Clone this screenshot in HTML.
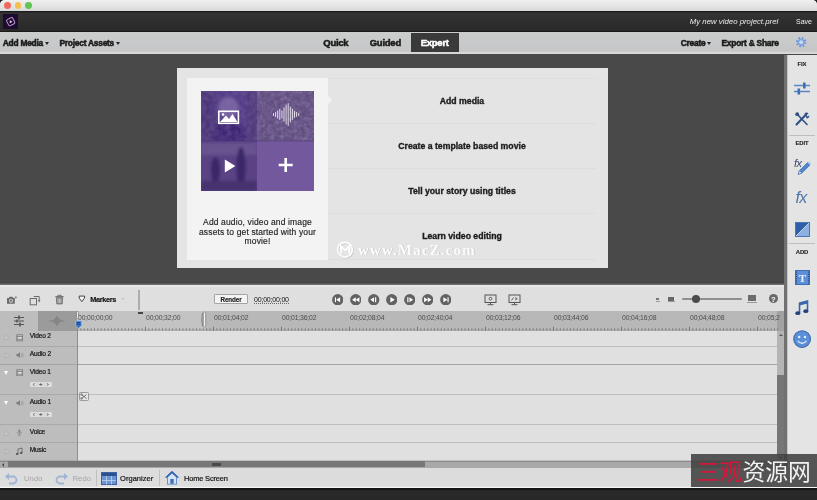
<!DOCTYPE html>
<html lang="en">
<head>
<meta charset="utf-8">
<title>My new video project.prel</title>
<style>
*{box-sizing:border-box;margin:0;padding:0}
html,body{width:817px;height:500px;overflow:hidden;background:#494949}
body{position:relative;font-family:"Liberation Sans","DejaVu Sans",sans-serif;color:#1a1a1a;font-size:8px}
.abs,.abs *{position:absolute}
#app{position:absolute;left:0;top:0;width:817px;height:500px;overflow:hidden;will-change:transform}
#app div,#app span,#app svg{position:absolute}
.t{white-space:nowrap;line-height:1}
.b{font-weight:bold;-webkit-text-stroke:.5px currentColor}
.sb{font-weight:bold;-webkit-text-stroke:.15px currentColor}
/* window chrome */
#titlebar{left:0;top:0;width:817px;height:11.300px;background:linear-gradient(#f0f0f0,#d9d9d9)}
.tl{width:6.800px;height:6.800px;border-radius:50%;top:2.200px}
#hdr{left:0;top:11.300px;width:817px;height:20.300px;background:linear-gradient(#181818 0,#1c1c1c 4%,#343434 9%,#2e2e2e 50%,#2a2a2a 93%,#1a1a1a 97%,#1a1a1a 100%)}
#menubar{left:0;top:31.600px;width:817px;height:22.700px;background:linear-gradient(#cbcccc 0,#c6c7c8 80%,#c4c5c5 87%,#d4d4d4 91%,#d9d9d9 100%)}
#work{left:0;top:54.300px;width:784px;height:229px;background:#494949}
#rpanel{left:787px;top:54px;width:30px;height:414px;background:#e4e4e4;box-shadow:inset 1px 0 0 #c4c4c4}
#rtop{left:784px;top:54.300px;width:33px;height:.9px;background:#4a4a4a}
/* dialog */
#dlg{left:177px;top:68px;width:431px;height:200px;background:#e5e4e5}
#card{left:187px;top:78px;width:141px;height:182px;background:#f3f3f3}
.row{left:328px;width:268px;height:45px;border-bottom:1px solid #dddcde}
.rowt{left:0;width:268px;text-align:center;font-weight:bold;font-size:8.700px;letter-spacing:0;color:#1c1c1c;top:18.200px;-webkit-text-stroke:.35px #1c1c1c}
/* timeline */
#tlpanel{left:0;top:282px;width:784px;height:186px;background:#dfdfdf}
#sep{left:784px;top:54px;width:3px;height:414px;background:#707070}
#tltop{left:0;top:0;width:784px;height:3px;background:linear-gradient(#3a3a3a,#777)}
#ruler{left:0;top:29px;width:784px;height:20px;background:#bdbdbd}
.th{left:0;width:77px;background:#bdbdbd;border-bottom:1px solid #a9a9a9}
.tr{left:77px;width:700px;border-bottom:1px solid #bfbfbf}
.tn{left:29.800px;font-size:6.600px;color:#0c0c0c;letter-spacing:-.18px;-webkit-text-stroke:.2px #222}
#bottombar{left:0;top:467.600px;width:817px;height:20.400px;background:linear-gradient(#dcdcdc 0,#dddddd 92%,#f6f6f6 95%,#f6f6f6 100%)}
#foot{left:0;top:488px;width:817px;height:12px;background:linear-gradient(#121212 0,#161616 12%,#292929 22%,#282828 100%)}
</style>
</head>
<body>
<div id="app">
  <div id="titlebar">
    <div style="left:0;top:0;width:4px;height:4px;background:radial-gradient(circle at 100% 100%,rgba(0,0,0,0) 3.500px,#222 4.200px)"></div><div style="left:813px;top:0;width:4px;height:4px;background:radial-gradient(circle at 0 100%,rgba(0,0,0,0) 3.500px,#222 4.200px)"></div>
    <div class="tl" style="left:4.200px;background:#ee6a5f"></div>
    <div class="tl" style="left:14.700px;background:#f5bf4f"></div>
    <div class="tl" style="left:25.400px;background:#62c554"></div>
  </div>
  <div id="hdr">
    <svg style="left:2.800px;top:2.800px" width="15.400" height="15.400" viewBox="0 0 15 15"><rect width="15" height="15" fill="#1d0d2c"/><rect x="4.200" y="4.200" width="6.600" height="6.600" rx="1.200" fill="none" stroke="#c997e0" stroke-width=".9" transform="rotate(-27 7.500 7.500)"/><path d="M6.600 6.100 L9.300 7.600 L6.600 9.100Z" fill="#ecd3f7"/></svg>
    <span class="t" style="left:689.800px;top:7px;font-size:7.800px;font-style:italic;color:#ececec">My new video project.prel</span>
    <span class="t" style="left:796px;top:7px;font-size:7px;color:#f0f0f0">Save</span>
  </div>
  <div id="menubar">
    <span class="t b" style="left:2.800px;top:7.900px;font-size:8.400px;letter-spacing:-.24px">Add Media</span>
    <span class="t" style="left:45.300px;top:10.900px;width:0;height:0;border-left:2.5px solid transparent;border-right:2.5px solid transparent;border-top:3px solid #222"></span>
    <span class="t b" style="left:59.500px;top:7.900px;font-size:8.400px;letter-spacing:-.24px">Project Assets</span>
    <span class="t" style="left:116px;top:10.900px;width:0;height:0;border-left:2.5px solid transparent;border-right:2.5px solid transparent;border-top:3px solid #222"></span>
    <span class="t b" style="left:323.300px;top:6.800px;font-size:9.500px;letter-spacing:-.26px">Quick</span>
    <span class="t b" style="left:369.700px;top:6.800px;font-size:9.500px;letter-spacing:-.24px">Guided</span>
    <div style="left:411px;top:1.700px;width:47.500px;height:18.600px;background:#3a3a3a"></div>
    <span class="t b" style="left:420.700px;top:6.800px;font-size:9.500px;letter-spacing:-.25px;color:#fff">Expert</span>
    <span class="t b" style="left:680.800px;top:7.900px;font-size:8.400px;letter-spacing:-.24px">Create</span>
    <span class="t" style="left:707.200px;top:10.900px;width:0;height:0;border-left:2.5px solid transparent;border-right:2.5px solid transparent;border-top:3px solid #222"></span>
    <span class="t b" style="left:721.500px;top:7.900px;font-size:8.400px;letter-spacing:-.24px">Export &amp; Share</span>
    <svg style="left:795.300px;top:4.700px" width="12.300" height="12.300" viewBox="0 0 13 13"><circle cx="6.500" cy="6.500" r="4.400" fill="none" stroke="#6d95d4" stroke-width="2.200" stroke-dasharray="1.730 1.730"/><circle cx="6.500" cy="6.500" r="3.700" fill="#7ea3dc"/><circle cx="6.500" cy="6.500" r="2" fill="#c9daf3"/></svg>
  </div>
  <div id="work"></div>

  <div id="dlg"></div>
  <div class="row" style="top:78px;height:46px;border-top:1px solid #e0dfe0"><span class="t rowt">Add media</span></div>
  <div class="row" style="top:124px"><span class="t rowt" style="top:18.300px">Create a template based movie</span></div>
  <div class="row" style="top:169px"><span class="t rowt" style="top:18.300px">Tell your story using titles</span></div>
  <div class="row" style="top:214px;height:46px"><span class="t rowt" style="top:18.300px">Learn video editing</span></div>
  <div id="card"></div>
  <div style="left:328px;top:96px;width:0;height:0;border-top:4px solid transparent;border-bottom:4px solid transparent;border-left:4px solid #f3f3f3"></div>
  <svg id="pic" style="left:201px;top:91px" width="113" height="100" viewBox="0 0 113 100">
    <defs>
      <filter id="nz" x="0" y="0" width="100%" height="100%"><feTurbulence type="fractalNoise" baseFrequency="0.2" numOctaves="3" seed="7"/><feColorMatrix type="matrix" values="0 0 0 0 0.17  0 0 0 0 0.11  0 0 0 0 0.30  1.6 1.6 0 0 -1.15"/></filter><filter id="nz2" x="0" y="0" width="100%" height="100%"><feTurbulence type="fractalNoise" baseFrequency="0.3" numOctaves="2" seed="11"/><feColorMatrix type="matrix" values="0 0 0 0 0.50  0 0 0 0 0.44  0 0 0 0 0.62  1.1 1.1 0 0 -1.05"/></filter>
      <filter id="bl"><feGaussianBlur stdDeviation="1.6"/></filter>
    </defs>
    <rect x="0" y="0" width="56" height="50" fill="#543c88"/>
    <g filter="url(#bl)">
      <ellipse cx="27.500" cy="17" rx="10" ry="11" fill="#7a66a6"/>
      <ellipse cx="27" cy="43" rx="19" ry="13" fill="#3d2874"/>
      <rect x="0" y="0" width="14" height="50" fill="#4c367a"/>
      <rect x="46" y="0" width="10" height="50" fill="#4f3a7c"/>
    </g>
    <rect x="56" y="0" width="57" height="50" fill="#5e4e7b"/>
    <rect x="56" y="0" width="57" height="50" filter="url(#nz)"/><rect x="56" y="0" width="57" height="50" filter="url(#nz2)" opacity=".4"/><rect x="0" y="0" width="56" height="100" filter="url(#nz)" opacity=".45"/>
    <rect x="0" y="50" width="56" height="50" fill="#5a4284"/>
    <g filter="url(#bl)">
      <rect x="0" y="52" width="56" height="12" fill="#67528f"/>
      <ellipse cx="14.500" cy="79" rx="4.500" ry="13" fill="#3a2768"/>
      <ellipse cx="40" cy="76" rx="4.500" ry="20" fill="#3a2768"/>
      <rect x="0" y="90" width="56" height="10" fill="#46316f"/>
    </g>
    <rect x="56" y="50" width="57" height="50" fill="#74589d"/>
    <rect x="0" y="49.5" width="113" height="1" fill="#4a3570" opacity=".5"/>
    <!-- image icon -->
    <rect x="17.8" y="20.3" width="19.6" height="12" fill="none" stroke="#fff" stroke-width="1.6"/>
    <path d="M19 31 L25 24.5 L28 28 L31.5 23 L36.5 31Z" fill="#fff"/><circle cx="22" cy="23.5" r="1.3" fill="#fff"/>
    <!-- waveform -->
    <g stroke="#f1eef6" stroke-width=".9" stroke-linecap="round">
      <path d="M72.5 22.5v2M74.6 21.5v4M76.7 20v7M78.8 18.5v10M80.9 20v7M83 17v13M85.1 14v19M87.2 12.5v22M89.3 16v15M91.4 18.5v10M93.5 20.5v6M95.6 21.5v4M97.7 22.5v2"/>
    </g>
    <!-- play -->
    <path d="M23.8 68.6 L34.4 75 L23.8 81.4Z" fill="#fff"/>
    <!-- plus -->
    <path d="M84.7 67v14M77.7 74h14" stroke="#fff" stroke-width="2.6"/>
  </svg>
  <div class="t" style="left:187px;top:218px;width:141px;text-align:center;font-size:8.5px;line-height:9.6px;letter-spacing:.13px;color:#1e1e1e;white-space:normal;-webkit-text-stroke:.15px #1e1e1e">Add audio, video and image<br>assets to get started with your<br>movie!</div>
  <svg style="left:334px;top:239px" width="156" height="22" viewBox="0 0 156 22">
    <g transform="translate(.7 .7)" opacity=".55"><circle cx="11" cy="10.7" r="7.4" fill="none" stroke="#a9a9b6" stroke-width="1.5"/><text x="24" y="15.5" font-family="'Liberation Serif',serif" font-weight="bold" font-size="15" letter-spacing="1.15" fill="#a9a9b6">www.MacZ.com</text></g>
    <circle cx="11" cy="10.7" r="7.4" fill="none" stroke="#fff" stroke-opacity=".95" stroke-width="1.7"/>
    <path d="M6.8 14.5 V7.3 L11 11.4 L15.2 7.3 V14.5" fill="none" stroke="#fff" stroke-opacity=".95" stroke-width="1.7"/>
    <text x="24" y="15.5" font-family="'Liberation Serif',serif" font-weight="bold" font-size="15" letter-spacing="1.15" fill="#fff" fill-opacity=".93">www.MacZ.com</text>
  </svg>
  <div id="rpanel">
    <span class="t sb" style="left:0;width:30px;text-align:center;top:8.0px;font-size:5.900px;color:#1c1c1c;letter-spacing:-.05px;-webkit-text-stroke:.1px #1c1c1c">FIX</span>
    <svg style="left:6px;top:27px" width="18" height="15" viewBox="0 0 18 15"><path d="M1 4.500h16M1 10.500h16" stroke="#5b86c4" stroke-width="1.500"/><rect x="10" y="1.500" width="2.600" height="6" fill="#3f6fb5"/><rect x="4.500" y="7.500" width="2.600" height="6" fill="#3f6fb5"/></svg>
    <svg style="left:7px;top:57px" width="16" height="16" viewBox="0 0 16 16"><path d="M2.500 13.500L12 3.500" stroke="#2f4f86" stroke-width="2" stroke-linecap="round"/><path d="M3 3l10 10.500" stroke="#2f4f86" stroke-width="1.600" stroke-linecap="round"/><path d="M10.500 2.200c1.500-1 3.300-.6 4 .300l-2 1.800.8 1.300 2-1.200c.2 1.500-.8 2.800-2.600 3z" fill="#2f4f86"/><circle cx="3.200" cy="3.200" r="1.900" fill="#2f4f86"/></svg>
    <div style="left:2px;top:80.5px;width:26px;height:1px;background:#bdbdbd"></div>
    <span class="t sb" style="left:0;width:30px;text-align:center;top:87.0px;font-size:5.900px;color:#1c1c1c;letter-spacing:-.05px;-webkit-text-stroke:.1px #1c1c1c">EDIT</span>
    <svg style="left:5px;top:102px" width="24" height="21" viewBox="0 0 24 21"><text x="2" y="10.500" font-family="'Liberation Sans',sans-serif" font-style="italic" font-size="11" letter-spacing="-.5" fill="#3a4c6e">fx</text><path d="M6.200 18.300l1.200-3.600 8.200-8.200 2.400 2.400-8.200 8.200z" fill="#4f86d0" stroke="#2f5fa8" stroke-width=".6"/><path d="M6.200 18.300l1.200-3.600 2.400 2.400z" fill="#e4e9f2" stroke="#2f4f86" stroke-width=".4"/><path d="M15.600 6.500l1.300-1.300 2.400 2.400-1.300 1.300z" fill="#b8cdee"/></svg>
    <svg style="left:6px;top:134px" width="20" height="20" viewBox="0 0 20 20"><text x="2.500" y="14.500" font-family="'Liberation Sans',sans-serif" font-style="italic" font-size="16" letter-spacing="-.8" fill="#4f72a8">fx</text></svg>
    <svg style="left:7.500px;top:167.5px" width="15" height="15" viewBox="0 0 15 15"><rect x=".500" y=".500" width="14" height="14" fill="#2f5fa8" stroke="#4a76b8" stroke-width="1"/><path d="M1 14L14 1v13z" fill="#8db0e2"/><path d="M1 14L14 1" stroke="#dfe9f7" stroke-width=".8"/></svg>
    <div style="left:2px;top:189px;width:26px;height:1px;background:#bdbdbd"></div>
    <span class="t sb" style="left:0;width:30px;text-align:center;top:195.5px;font-size:5.900px;color:#1c1c1c;letter-spacing:-.05px;-webkit-text-stroke:.1px #1c1c1c">ADD</span>
    <svg style="left:7.500px;top:215.5px" width="15" height="15" viewBox="0 0 15 15"><rect x=".500" y=".500" width="14" height="14" fill="#5e90d8" stroke="#3f6fb8" stroke-width="1"/><path d="M1.500 1.500v12M13.500 1.500v12" stroke="#2a4f90" stroke-width="1.200" stroke-dasharray="1.200 1"/><text x="7.500" y="11.500" text-anchor="middle" font-family="'Liberation Serif',serif" font-weight="bold" font-size="11" fill="#eaf1fb">T</text></svg>
    <svg style="left:7px;top:245px" width="16" height="18" viewBox="0 0 16 18"><path d="M5.500 14v-10l8-2v10" fill="none" stroke="#3a66ad" stroke-width="1.600"/><path d="M5.500 4l8-2v2.500l-8 2z" fill="#3a66ad"/><ellipse cx="3.800" cy="14.200" rx="2.500" ry="1.900" fill="#24427c"/><ellipse cx="11.800" cy="12.200" rx="2.500" ry="1.900" fill="#24427c"/></svg>
    <svg style="left:6.400px;top:275.900px" width="18.200" height="18.200" viewBox="0 0 17 17"><circle cx="8.500" cy="8.500" r="7.800" fill="#5b8fd8" stroke="#3a66ad" stroke-width="1"/><circle cx="5.800" cy="6.500" r="1.100" fill="#e8f0fb"/><circle cx="11.200" cy="6.500" r="1.100" fill="#e8f0fb"/><path d="M4.500 10c1.800 3.200 6.200 3.200 8 0" fill="none" stroke="#e8f0fb" stroke-width="1.200"/></svg>
  </div>
  <div id="tlpanel">
    <div id="tltop"></div><div style="left:0;top:3px;width:784px;height:1.600px;background:#e8e8e8"></div>
    <svg style="left:5.500px;top:12.500px" width="12" height="10" viewBox="0 0 12 10"><path d="M1 3h1.800l.8-1.200h2.800l.8 1.200h1.600v5.800H1z" fill="#6c6c6c"/><circle cx="5" cy="5.700" r="2" fill="#d6d6d6"/><circle cx="5" cy="5.700" r="1.100" fill="#6c6c6c"/><path d="M9.800 1.200v2.400M8.600 2.400h2.400" stroke="#7a7a7a" stroke-width=".7"/></svg>
    <svg style="left:29px;top:12.500px" width="13" height="11" viewBox="0 0 13 11"><rect x="1.200" y="3.500" width="6.300" height="6.300" fill="none" stroke="#6a6a6a" stroke-width="1"/><path d="M4.800 1.500h5.400v4.800" fill="none" stroke="#6a6a6a" stroke-width="1"/><path d="M8.800 5.300l1.400 1.900 1.400-1.900z" fill="#6a6a6a"/></svg>
    <svg style="left:53.500px;top:12.300px" width="11" height="11" viewBox="0 0 11 11"><path d="M1.300 2.600h8.400M3.800 2.600v-1.300h3.400v1.300" fill="none" stroke="#666" stroke-width=".9"/><path d="M2.300 3.600h6.400l-.5 6.400h-5.400z" fill="#8a8a8a" stroke="#666" stroke-width=".7"/><path d="M4.200 4.500v4.600M5.500 4.500v4.600M6.800 4.500v4.600" stroke="#dcdcdc" stroke-width=".6"/></svg>
    <svg style="left:78.200px;top:12.600px" width="8.200" height="8.200" viewBox="0 0 9 9"><path d="M1.200 1.200h6.100l-.2 2.300-2.850 3.800-2.850-3.800z" fill="#f4f4f4" stroke="#222" stroke-width=".9" stroke-linejoin="round"/></svg>
    <span class="t sb" style="left:90.300px;top:13.600px;font-size:7.300px;letter-spacing:-.34px;color:#111">Markers</span>
    <span style="left:121px;top:16px;width:0;height:0;border-left:2px solid transparent;border-right:2px solid transparent;border-top:2.500px solid #c6c6c6"></span>
    <div style="left:138.200px;top:8px;width:1.400px;height:20px;background:#adadad"></div>
    <div style="left:214.300px;top:12.300px;width:33.400px;height:10px;background:#f4f4f4;border:1px solid #a4a4a4;border-radius:1px"></div>
    <span class="t sb" style="left:214.300px;width:33.400px;text-align:center;top:14.500px;font-size:6.300px;letter-spacing:-.1px;color:#222">Render</span>
    <span class="t" style="left:254px;top:13.600px;font-size:7px;letter-spacing:-.2px;color:#111;border-bottom:1px dotted #666;padding-bottom:0">00;00;00;00</span>
    <svg style="left:331.75px;top:11.700px" width="11.500" height="11.500" viewBox="0 0 11 11"><circle cx="5.500" cy="5.500" r="5.400" fill="#626262"/><path d="M3.300 3.200v4.600" stroke="#fff" stroke-width="1.100"/><path d="M7.800 3v5L4 5.500z" fill="#fff"/></svg>
    <svg style="left:349.85px;top:11.700px" width="11.500" height="11.500" viewBox="0 0 11 11"><circle cx="5.500" cy="5.500" r="5.400" fill="#626262"/><path d="M5.500 3v5L2 5.500zM9 3v5L5.500 5.500z" fill="#fff"/></svg>
    <svg style="left:368.05px;top:11.700px" width="11.500" height="11.500" viewBox="0 0 11 11"><circle cx="5.500" cy="5.500" r="5.400" fill="#626262"/><path d="M5.800 3v5L2.300 5.500z" fill="#fff"/><path d="M7.300 3.200v4.600" stroke="#fff" stroke-width="1.100"/></svg>
    <svg style="left:385.85px;top:11.700px" width="11.500" height="11.500" viewBox="0 0 11 11"><circle cx="5.500" cy="5.500" r="5.400" fill="#626262"/><path d="M4.200 2.800v5.400L8.400 5.500z" fill="#fff"/></svg>
    <svg style="left:403.95px;top:11.700px" width="11.500" height="11.500" viewBox="0 0 11 11"><circle cx="5.500" cy="5.500" r="5.400" fill="#626262"/><path d="M5.200 3v5L8.700 5.500z" fill="#fff"/><path d="M3.700 3.200v4.600" stroke="#fff" stroke-width="1.100"/></svg>
    <svg style="left:421.85px;top:11.700px" width="11.500" height="11.500" viewBox="0 0 11 11"><circle cx="5.500" cy="5.500" r="5.400" fill="#626262"/><path d="M2 3v5L5.500 5.500zM5.500 3v5L9 5.500z" fill="#fff"/></svg>
    <svg style="left:439.95px;top:11.700px" width="11.500" height="11.500" viewBox="0 0 11 11"><circle cx="5.500" cy="5.500" r="5.400" fill="#626262"/><path d="M3.200 3v5L7 5.500z" fill="#fff"/><path d="M7.700 3.200v4.600" stroke="#fff" stroke-width="1.100"/></svg>
    <svg style="left:484px;top:11.600px" width="13" height="12" viewBox="0 0 13 12"><rect x="1" y="1" width="11" height="7.500" fill="none" stroke="#555" stroke-width="1"/><circle cx="6.500" cy="4.700" r="1.400" fill="none" stroke="#555" stroke-width=".9"/><path d="M6.500 8.500v2M3.500 10.700h6" stroke="#555" stroke-width="1"/></svg>
    <svg style="left:507.500px;top:11.600px" width="13" height="12" viewBox="0 0 13 12"><rect x="1" y="1" width="11" height="7.500" fill="none" stroke="#555" stroke-width="1"/><path d="M3.500 6.500l2-3M7 3.500l2.200 1.300-2.200 1.300" fill="none" stroke="#555" stroke-width=".9"/><path d="M6.500 8.500v2M3.500 10.700h6" stroke="#555" stroke-width="1"/></svg>
    <div style="left:656px;top:16px;width:3px;height:2px;background:#777"></div><div style="left:655.500px;top:18.5px;width:4px;height:1px;background:#999"></div>
    <div style="left:668px;top:14.5px;width:6px;height:4px;background:#666"></div><div style="left:667.500px;top:19px;width:7px;height:1px;background:#999"></div>
    <div style="left:682px;top:16px;width:60px;height:2px;background:#8e8e8e;border-radius:1px"></div>
    <div style="left:691.500px;top:13px;width:8px;height:8px;border-radius:50%;background:#4a4a4a"></div>
    <div style="left:748px;top:13px;width:8px;height:6px;background:#6c6c6c"></div><div style="left:747px;top:19.5px;width:10px;height:1px;background:#999"></div>
    <div style="left:769px;top:12px;width:9px;height:9px;border-radius:50%;background:#6a6a6a"></div><span class="t sb" style="left:769px;width:9px;text-align:center;top:13.5px;font-size:7px;color:#f2f2f2">?</span>
    <div id="ruler"></div><div style="left:206px;top:29px;width:572px;height:20px;background:#b8b8b8"></div><div style="left:77px;top:29px;width:128px;height:20px;background:#c3c3c3"></div>
    <div style="left:38px;top:29px;width:39px;height:20px;background:#9b9b9b"></div>
    <div style="left:777px;top:29px;width:7px;height:20px;background:#a2a2a2"></div>
    <svg style="left:12px;top:32px" width="14" height="14" viewBox="0 0 14 14"><path d="M2 3.500h10M2 7h10M2 10.500h10" stroke="#555" stroke-width="1"/><path d="M7 1.500v4M5 5.500v3M8 8.500v4" stroke="#555" stroke-width="1.600"/></svg>
    <svg style="left:48px;top:32px" width="18" height="14" viewBox="0 0 18 14"><path d="M1.500 7h15" stroke="#808080" stroke-width="1"/><path d="M9 1.500c-1.200 2.500-3 4.500-5 5.500 2 1 3.800 3 5 5.500 1.200-2.500 3-4.500 5-5.500-2-1-3.800-3-5-5.500z" fill="#858585"/></svg>
    <span class="t" style="left:78px;top:33.300px;font-size:6.800px;color:#4c4c4c;letter-spacing:-.15px">00;00;00;00</span>
    <span class="t" style="left:146px;top:33.300px;font-size:6.800px;color:#4c4c4c;letter-spacing:-.15px">00;00;32;00</span>
    <span class="t" style="left:214px;top:33.300px;font-size:6.800px;color:#4c4c4c;letter-spacing:-.15px">00;01;04;02</span>
    <span class="t" style="left:282px;top:33.300px;font-size:6.800px;color:#4c4c4c;letter-spacing:-.15px">00;01;36;02</span>
    <span class="t" style="left:350px;top:33.300px;font-size:6.800px;color:#4c4c4c;letter-spacing:-.15px">00;02;08;04</span>
    <span class="t" style="left:418px;top:33.300px;font-size:6.800px;color:#4c4c4c;letter-spacing:-.15px">00;02;40;04</span>
    <span class="t" style="left:486px;top:33.300px;font-size:6.800px;color:#4c4c4c;letter-spacing:-.15px">00;03;12;06</span>
    <span class="t" style="left:554px;top:33.300px;font-size:6.800px;color:#4c4c4c;letter-spacing:-.15px">00;03;44;06</span>
    <span class="t" style="left:622px;top:33.300px;font-size:6.800px;color:#4c4c4c;letter-spacing:-.15px">00;04;16;08</span>
    <span class="t" style="left:690px;top:33.300px;font-size:6.800px;color:#4c4c4c;letter-spacing:-.15px">00;04;48;08</span>
    <span class="t" style="left:758px;top:33.300px;font-size:6.800px;color:#4c4c4c;letter-spacing:-.15px">00;05;2</span>
    <svg style="left:0;top:29px" width="778" height="20" viewBox="0 0 778 20"><path d="M77 19.100h701" stroke="#a6a6a6" stroke-width=".8"/><path d="M77.5 15.8v4.2M80.9 17.4v2M84.3 17.4v2M87.7 17.4v2M91.1 17.4v2M94.5 17.4v2M97.9 17.4v2M101.3 17.4v2M104.7 17.4v2M108.1 17.4v2M111.5 17.4v2M114.9 17.4v2M118.3 17.4v2M121.7 17.4v2M125.1 17.4v2M128.5 17.4v2M131.9 17.4v2M135.3 17.4v2M138.7 17.4v2M142.1 17.4v2M145.5 15.8v4.2M148.9 17.4v2M152.3 17.4v2M155.7 17.4v2M159.1 17.4v2M162.5 17.4v2M165.9 17.4v2M169.3 17.4v2M172.7 17.4v2M176.1 17.4v2M179.5 17.4v2M182.9 17.4v2M186.3 17.4v2M189.7 17.4v2M193.1 17.4v2M196.5 17.4v2M199.9 17.4v2M203.3 17.4v2M206.7 17.4v2M210.1 17.4v2M213.5 15.8v4.2M216.9 17.4v2M220.3 17.4v2M223.7 17.4v2M227.1 17.4v2M230.5 17.4v2M233.9 17.4v2M237.3 17.4v2M240.7 17.4v2M244.1 17.4v2M247.5 17.4v2M250.9 17.4v2M254.3 17.4v2M257.7 17.4v2M261.1 17.4v2M264.5 17.4v2M267.9 17.4v2M271.3 17.4v2M274.7 17.4v2M278.1 17.4v2M281.5 15.8v4.2M284.9 17.4v2M288.3 17.4v2M291.7 17.4v2M295.1 17.4v2M298.5 17.4v2M301.9 17.4v2M305.3 17.4v2M308.7 17.4v2M312.1 17.4v2M315.5 17.4v2M318.9 17.4v2M322.3 17.4v2M325.7 17.4v2M329.1 17.4v2M332.5 17.4v2M335.9 17.4v2M339.3 17.4v2M342.7 17.4v2M346.1 17.4v2M349.5 15.8v4.2M352.9 17.4v2M356.3 17.4v2M359.7 17.4v2M363.1 17.4v2M366.5 17.4v2M369.9 17.4v2M373.3 17.4v2M376.7 17.4v2M380.1 17.4v2M383.5 17.4v2M386.9 17.4v2M390.3 17.4v2M393.7 17.4v2M397.1 17.4v2M400.5 17.4v2M403.9 17.4v2M407.3 17.4v2M410.7 17.4v2M414.1 17.4v2M417.5 15.8v4.2M420.9 17.4v2M424.3 17.4v2M427.7 17.4v2M431.1 17.4v2M434.5 17.4v2M437.9 17.4v2M441.3 17.4v2M444.7 17.4v2M448.1 17.4v2M451.5 17.4v2M454.9 17.4v2M458.3 17.4v2M461.7 17.4v2M465.1 17.4v2M468.5 17.4v2M471.9 17.4v2M475.3 17.4v2M478.7 17.4v2M482.1 17.4v2M485.5 15.8v4.2M488.9 17.4v2M492.3 17.4v2M495.7 17.4v2M499.1 17.4v2M502.5 17.4v2M505.9 17.4v2M509.3 17.4v2M512.7 17.4v2M516.1 17.4v2M519.5 17.4v2M522.9 17.4v2M526.3 17.4v2M529.7 17.4v2M533.1 17.4v2M536.5 17.4v2M539.9 17.4v2M543.3 17.4v2M546.7 17.4v2M550.1 17.4v2M553.5 15.8v4.2M556.9 17.4v2M560.3 17.4v2M563.7 17.4v2M567.1 17.4v2M570.5 17.4v2M573.9 17.4v2M577.3 17.4v2M580.7 17.4v2M584.1 17.4v2M587.5 17.4v2M590.9 17.4v2M594.3 17.4v2M597.7 17.4v2M601.1 17.4v2M604.5 17.4v2M607.9 17.4v2M611.3 17.4v2M614.7 17.4v2M618.1 17.4v2M621.5 15.8v4.2M624.9 17.4v2M628.3 17.4v2M631.7 17.4v2M635.1 17.4v2M638.5 17.4v2M641.9 17.4v2M645.3 17.4v2M648.7 17.4v2M652.1 17.4v2M655.5 17.4v2M658.9 17.4v2M662.3 17.4v2M665.7 17.4v2M669.1 17.4v2M672.5 17.4v2M675.9 17.4v2M679.3 17.4v2M682.7 17.4v2M686.1 17.4v2M689.5 15.8v4.2M692.9 17.4v2M696.3 17.4v2M699.7 17.4v2M703.1 17.4v2M706.5 17.4v2M709.9 17.4v2M713.3 17.4v2M716.7 17.4v2M720.1 17.4v2M723.5 17.4v2M726.9 17.4v2M730.3 17.4v2M733.7 17.4v2M737.1 17.4v2M740.5 17.4v2M743.9 17.4v2M747.3 17.4v2M750.7 17.4v2M754.1 17.4v2M757.5 15.8v4.2M760.9 17.4v2M764.3 17.4v2M767.7 17.4v2M771.1 17.4v2M774.5 17.4v2M777.9 17.4v2" stroke="#555" stroke-width=".65"/></svg>
    <svg style="left:200.300px;top:29px" width="8" height="17" viewBox="0 0 8 17"><path d="M3 1.500c-1.500 3-1.500 11 0 14" fill="none" stroke="#777" stroke-width="1"/><rect x="3.300" y="1" width="2.400" height="15" rx="1.200" fill="#f0f0f0" stroke="#777" stroke-width=".7"/></svg>
    <div style="left:76.300px;top:29.400px;width:2.800px;height:8px;border-radius:1.400px;background:#f0f0f0;border:.6px solid #8a8a8a"></div><div style="left:138.200px;top:30.400px;width:4.400px;height:1.600px;background:#444"></div>
    <div id="tracks" style="left:0;top:49px;width:777px;height:130px;background:#e0e0e0"></div>
    <div class="th" style="top:49px;height:16px"></div>
    <div class="tr" style="top:49px;height:16px"></div>
    <span class="t tn" style="top:51px">Video 2</span>
    <svg style="left:15.500px;top:52.2px" width="7.600" height="7.600" viewBox="0 0 9 10" preserveAspectRatio="none"><rect x="1" y="1" width="7" height="8" fill="none" stroke="#777" stroke-width="1"/><path d="M1 3.300h7M1 6.700h7" stroke="#666" stroke-width=".8"/><rect x="2.800" y="3.800" width="3.400" height="2.400" fill="#ddd"/></svg>
    <svg style="left:3.500px;top:52px" width="6" height="7" viewBox="0 0 6 7"><path d="M.8.800L5 3.500.8 6.200z" fill="#c8c8c8" stroke="#aaaaaa" stroke-width=".6"/></svg>
    <div class="th" style="top:65px;height:18px"></div>
    <div class="tr" style="top:65px;height:18px"></div>
    <span class="t tn" style="top:69px">Audio 2</span>
    <svg style="left:14px;top:67.5px" width="8.500" height="8.500" viewBox="0 0 10 10" transform="translate(1.500 .8)"><path d="M1 3.700h1.800L5.300 1.500v7L2.800 6.300H1z" fill="#808080"/><path d="M6.500 3.300c.9.900.9 2.500 0 3.400M7.800 2.200c1.500 1.500 1.500 4.100 0 5.600" fill="none" stroke="#888" stroke-width=".7"/></svg>
    <svg style="left:3.500px;top:69.5px" width="6" height="7" viewBox="0 0 6 7"><path d="M.8.800L5 3.500.8 6.200z" fill="#c8c8c8" stroke="#aaaaaa" stroke-width=".6"/></svg>
    <div class="th" style="top:83px;height:30px"></div>
    <div class="tr" style="top:83px;height:30px"></div>
    <span class="t tn" style="top:87px">Video 1</span>
    <svg style="left:15.500px;top:86.7px" width="7.600" height="7.600" viewBox="0 0 9 10" preserveAspectRatio="none"><rect x="1" y="1" width="7" height="8" fill="none" stroke="#777" stroke-width="1"/><path d="M1 3.300h7M1 6.700h7" stroke="#666" stroke-width=".8"/><rect x="2.800" y="3.800" width="3.400" height="2.400" fill="#ddd"/></svg>
    <span style="left:3.500px;top:88.5px;width:0;height:0;border-left:2.700px solid transparent;border-right:2.700px solid transparent;border-top:4.200px solid #fafafa"></span>
    <div style="left:30px;top:99px;width:21.500px;height:5.400px;background:#dedede;border-radius:1px;margin-top:.8px"></div>
    <svg style="left:30px;top:99px" width="21.500" height="5.400" viewBox="0 0 18 7" preserveAspectRatio="none" transform="translate(0 .8)"><path d="M4 2l-1.500 1.500L4 5M14 2l1.500 1.500L14 5" fill="none" stroke="#666" stroke-width=".8"/><path d="M9 1.800l1.700 1.700L9 5.200 7.300 3.500z" fill="#666"/><path d="M6 0v7M12 0v7" stroke="#c4c4c4" stroke-width=".6"/></svg>
    <div class="th" style="top:113px;height:29.600px"></div>
    <div class="tr" style="top:113px;height:29.600px"></div>
    <span class="t tn" style="top:117px">Audio 1</span>
    <svg style="left:14px;top:115.5px" width="8.500" height="8.500" viewBox="0 0 10 10" transform="translate(1.500 .8)"><path d="M1 3.700h1.800L5.300 1.500v7L2.800 6.300H1z" fill="#808080"/><path d="M6.500 3.300c.9.900.9 2.500 0 3.400M7.800 2.200c1.500 1.500 1.500 4.100 0 5.600" fill="none" stroke="#888" stroke-width=".7"/></svg>
    <span style="left:3.500px;top:118.5px;width:0;height:0;border-left:2.700px solid transparent;border-right:2.700px solid transparent;border-top:4.200px solid #fafafa"></span>
    <div style="left:30px;top:129px;width:21.500px;height:5.400px;background:#dedede;border-radius:1px;margin-top:.8px"></div>
    <svg style="left:30px;top:129px" width="21.500" height="5.400" viewBox="0 0 18 7" preserveAspectRatio="none" transform="translate(0 .8)"><path d="M4 2l-1.500 1.500L4 5M14 2l1.500 1.500L14 5" fill="none" stroke="#666" stroke-width=".8"/><path d="M9 1.800l1.700 1.700L9 5.200 7.300 3.500z" fill="#666"/><path d="M6 0v7M12 0v7" stroke="#c4c4c4" stroke-width=".6"/></svg>
    <div class="th" style="top:142.600px;height:18.400px"></div>
    <div class="tr" style="top:142.600px;height:18.400px"></div>
    <span class="t tn" style="top:147px">Voice</span>
    <svg style="left:14px;top:145.5px" width="7.200" height="8" viewBox="0 0 9 10" transform="translate(1.800 .6)"><rect x="3.200" y="1" width="2.600" height="5" rx="1.300" fill="#858585"/><path d="M1.800 4.500c0 3.600 5.400 3.600 5.400 0M4.500 7.300v1.700M2.800 9.200h3.400" fill="none" stroke="#858585" stroke-width=".8"/></svg>
    <svg style="left:3.500px;top:147.5px" width="6" height="7" viewBox="0 0 6 7"><path d="M.8.800L5 3.500.8 6.200z" fill="#c8c8c8" stroke="#aaaaaa" stroke-width=".6"/></svg>
    <div class="th" style="top:161px;height:18px"></div>
    <div class="tr" style="top:161px;height:18px"></div>
    <span class="t tn" style="top:165px">Music</span>
    <svg style="left:14.800px;top:164.800px" width="8.800" height="8.800" viewBox="0 0 11 11"><path d="M3.800 8.500v-6l5-1.200v6" fill="none" stroke="#4a4a4a" stroke-width=".8"/><ellipse cx="2.700" cy="8.600" rx="1.500" ry="1.100" fill="#444"/><ellipse cx="7.700" cy="7.400" rx="1.500" ry="1.100" fill="#444"/></svg>
    <svg style="left:3.500px;top:165.5px" width="6" height="7" viewBox="0 0 6 7"><path d="M.8.800L5 3.500.8 6.200z" fill="#c8c8c8" stroke="#aaaaaa" stroke-width=".6"/></svg>
    <div style="left:0;top:82px;width:777px;height:1px;background:#a4a4a4"></div>
    <svg style="left:78.500px;top:109.5px" width="10" height="9" viewBox="0 0 10 9"><rect x=".500" y=".500" width="9" height="8" rx="1" fill="#e6e6e6" stroke="#8a8a8a" stroke-width=".8"/><path d="M2.500 2.500l5 4M2.500 6.500l5-4" stroke="#555" stroke-width=".8"/><circle cx="2.500" cy="2.500" r=".9" fill="none" stroke="#555" stroke-width=".6"/><circle cx="2.500" cy="6.500" r=".9" fill="none" stroke="#555" stroke-width=".6"/></svg>
    <div style="left:77px;top:45px;width:1px;height:134px;background:#c2786c"></div>
    <svg style="left:73.900px;top:37.500px" width="9.200" height="9.200" viewBox="0 0 8 8"><path d="M1.300 .800h5.400v3.800L4 7.300 1.300 4.600z" fill="#3c74c0" stroke="#9fbfe8" stroke-width=".7"/><path d="M2.600 2.300h2.800M2.600 3.600h2.800" stroke="#16386e" stroke-width=".7"/></svg>
    <div style="left:777px;top:49px;width:7px;height:44px;background:#b4b4b4"></div>
    <div style="left:777px;top:93px;width:7px;height:80px;background:#767676"></div>
    <div style="left:777px;top:173px;width:7px;height:6px;background:#b4b4b4"></div>
    <span style="left:778.500px;top:52px;width:0;height:0;border-left:2px solid transparent;border-right:2px solid transparent;border-bottom:2.500px solid #555"></span>
    <span style="left:778.500px;top:174.5px;width:0;height:0;border-left:2px solid transparent;border-right:2px solid transparent;border-top:2.500px solid #555"></span>
    <div style="left:0;top:178.600px;width:784px;height:7.400px;background:linear-gradient(#8c8c8c 0,#8c8c8c 14%,#a8a8a8 20%,#a8a8a8 100%)"></div>
    <div style="left:8px;top:178.600px;width:417px;height:6.900px;background:#777"></div>
    <div style="left:212px;top:181px;width:9px;height:3px;background:#4a4a4a"></div>
    <span style="left:2px;top:180.5px;width:0;height:0;border-top:2px solid transparent;border-bottom:2px solid transparent;border-right:2.500px solid #444"></span>
    <span style="left:779px;top:180.5px;width:0;height:0;border-top:2px solid transparent;border-bottom:2px solid transparent;border-left:2.500px solid #444"></span>
  </div>
  <div id="sep"></div>
  <div id="rtop"></div>
  <div id="bottombar">
    <svg style="left:4px;top:3px" width="15" height="14" viewBox="0 0 15 14"><path d="M3.500 5.500h5.500a3.500 3.500 0 0 1 0 7h-4" fill="none" stroke="#9fb4d6" stroke-width="1.800"/><path d="M1 5.500l4-3.500v7z" fill="#9fb4d6"/></svg>
    <span class="t" style="left:24px;top:7px;font-size:7.500px;color:#a3a3a3;letter-spacing:.2px">Undo</span>
    <svg style="left:54px;top:3px" width="15" height="14" viewBox="0 0 15 14"><path d="M11.500 5.500h-5.500a3.500 3.500 0 0 0 0 7h4" fill="none" stroke="#9fb4d6" stroke-width="1.800"/><path d="M14 5.500l-4-3.500v7z" fill="#9fb4d6"/></svg>
    <span class="t" style="left:72.500px;top:7px;font-size:7.500px;color:#a3a3a3;letter-spacing:.2px">Redo</span>
    <div style="left:96px;top:2px;width:1px;height:16px;background:#c0c0c0"></div>
    <svg style="left:101px;top:4px" width="16" height="13" viewBox="0 0 16 13"><rect x=".500" y=".500" width="15" height="12" fill="#6d94d2" stroke="#3a62a4" stroke-width="1"/><rect x="1" y="1" width="14" height="3" fill="#2c4f8e"/><path d="M1 8.500h14M5.500 4v8.500M10.500 4v8.500" stroke="#c9daf2" stroke-width=".7"/></svg>
    <span class="t" style="left:120px;top:7px;font-size:7.500px;color:#151515;letter-spacing:.05px;-webkit-text-stroke:.2px #151515">Organizer</span>
    <div style="left:159px;top:2px;width:1px;height:16px;background:#c0c0c0"></div>
    <svg style="left:164px;top:2px" width="16" height="16" viewBox="0 0 16 16"><path d="M8 1L1 7.500h2v7h10v-7h2z" fill="#4a7cc6"/><path d="M8 3.200L3.800 7v6.700h8.400V7z" fill="#d5e3f6"/><rect x="6.300" y="9" width="3.400" height="4.700" fill="#3f6fb5"/><path d="M8 1L1 7.500h2.200L8 3.200l4.800 4.300H15z" fill="#3566b2"/></svg>
    <span class="t" style="left:184px;top:7px;font-size:7.500px;color:#151515;letter-spacing:-.2px;-webkit-text-stroke:.2px #151515">Home Screen</span>
  </div>
  <div id="foot"></div>
  <div id="wm" style="left:691px;top:454px;width:126px;height:33px;background:rgba(62,62,62,.86)"></div>
  <span class="t" style="left:696.800px;top:459.800px;font-family:'Liberation Sans','Noto Sans CJK SC',sans-serif;font-size:22.800px;line-height:24px;color:#f2f2f2;letter-spacing:0"><span style="position:static;color:#d3173a">三观</span>资源网</span>
</div>
</body>
</html>
